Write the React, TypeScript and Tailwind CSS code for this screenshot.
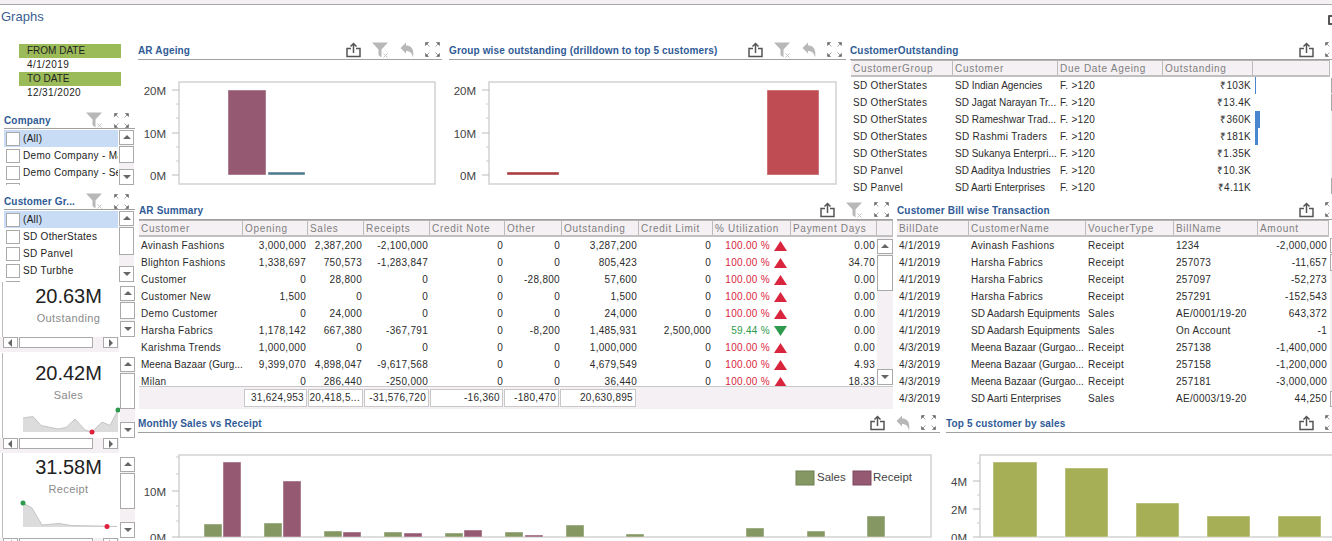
import React from 'react';

const titleCls = "text-[#2f5b96] font-bold text-[10px] tracking-[0.15px] whitespace-nowrap pt-[1px]";
const cellCls = "px-[2px] overflow-hidden whitespace-nowrap";
// long names sit tighter so they stay inside their column
const nameCls = (c: string) => cellCls + (c.length > 17 ? " tracking-[0px]" : "");

const ShareIcon = () => (
  <svg width="15" height="16" viewBox="0 0 15 16" fill="none" stroke="#555" strokeWidth="1.5" className="shrink-0">
    <path d="M5 6.5H1V14.5H14V6.5H10" />
    <path d="M7.5 11V1.5M4.5 4.5L7.5 1.5L10.5 4.5" />
  </svg>
);

const FilterIcon = () => (
  <svg width="17" height="16" viewBox="0 0 17 16" className="shrink-0">
    <path d="M0 0.5H16L9.5 7.5V15.5L6.5 13V7.5Z" fill="#b8b8b8" />
    <path d="M11.5 11.5L15.5 15.5M15.5 11.5L11.5 15.5" stroke="#c4c4c4" strokeWidth="1" />
  </svg>
);

const UndoIcon = () => (
  <svg width="14" height="16" viewBox="0 0 14 16" className="shrink-0">
    <path d="M0.5 6L6 0.5V3.5C11 3.5 14.5 7 13 15.5C12 11 10 9 6 9V11.5Z" fill="#b8b8b8" />
  </svg>
);

const ExpandIcon = () => (
  <svg width="15" height="15" viewBox="0 0 15 15" fill="#6a6a6a" stroke="#6a6a6a" strokeWidth="0.6" className="shrink-0">
    <path d="M0.5 0.5H3.5L0.5 3.5ZM1.5 1.5L4.5 4.5" />
    <path d="M14.5 0.5H11.5L14.5 3.5ZM13.5 1.5L10.5 4.5" />
    <path d="M0.5 14.5H3.5L0.5 11.5ZM1.5 13.5L4.5 10.5" />
    <path d="M14.5 14.5H11.5L14.5 11.5ZM13.5 13.5L10.5 10.5" />
  </svg>
);

const Arrow = ({ dir }: { dir: 'up' | 'down' | 'left' | 'right' }) => {
  const paths = { up: "M1 6H9L5 2Z", down: "M1 3H9L5 7Z", left: "M6 1V9L2 5Z", right: "M3 1V9L7 5Z" };
  return (
    <svg width="10" height="10" viewBox="0 0 10 10">
      <path d={paths[dir]} fill="#666" />
    </svg>
  );
};

const ScrollBtn = ({ dir, className }: { dir: 'up' | 'down' | 'left' | 'right'; className: string }) => (
  <div className={"shrink-0 bg-white border border-[#aaa] flex items-center justify-center " + className}>
    <Arrow dir={dir} />
  </div>
);

const VScroll = ({ className, thumb }: { className: string; thumb: string }) => (
  <div className={"w-[15px] shrink-0 bg-[#f5f0f3] flex flex-col justify-between " + className}>
    <div className="flex flex-col gap-[1px]">
      <ScrollBtn dir="up" className="h-[15px]" />
      <div className={"bg-white border border-[#aaa] " + thumb} />
    </div>
    <ScrollBtn dir="down" className="h-[16px]" />
  </div>
);

const HScroll = () => (
  <div className="h-[15px] bg-[#f5f0f3] flex items-start pl-[3px] w-[119px] shrink-0">
    <ScrollBtn dir="left" className="w-[15px] h-[11px]" />
    <div className="w-[74px] h-[11px] bg-white border border-[#aaa] ml-[1px]" />
    <ScrollBtn dir="right" className="w-[15px] h-[11px] ml-[10px]" />
  </div>
);

const PanelHeader = ({ title, share, filter, undo, expand = true, className }: {
  title: string; share?: boolean; filter?: boolean; undo?: boolean; expand?: boolean; className: string;
}) => (
  <div className={"h-[20px] shrink-0 border-b border-[#a0a0a0] flex items-center justify-between " + className}>
    <span className={titleCls}>{title}</span>
    <div className="flex items-center gap-[11px]">
      {share && <ShareIcon />}
      {filter && <FilterIcon />}
      {undo && <UndoIcon />}
      {expand && <ExpandIcon />}
    </div>
  </div>
);

const SliceRow = ({ label, active }: { label: string; active?: boolean }) => (
  <div className={"h-[17px] shrink-0 flex items-center pl-[2px] gap-[3px] text-[10px] tracking-[0.3px] text-[#222] whitespace-nowrap overflow-hidden " + (active ? "bg-[#c9dcf5]" : "")}>
    <div className="w-[14px] h-[14px] shrink-0 bg-white border border-[#aaa]" />
    <span>{label}</span>
  </div>
);

const Slicer = ({ title, rows, listCls, thumb, headCls }: { title: string; rows: string[]; listCls: string; thumb: string; headCls: string }) => (
  <div className={"ml-[4px] w-[131px] " + headCls}>
    <div className="h-[17px] border-b border-[#a0a0a0] flex items-center justify-between pr-[6px]">
      <span className={titleCls}>{title}</span>
      <div className="flex items-center gap-[11px]">
        <FilterIcon />
        <ExpandIcon />
      </div>
    </div>
    <div className={"flex mt-[1px] " + listCls}>
      <div className="w-[114px] overflow-hidden">
        {rows.map((r, i) => <SliceRow key={r} label={r} active={i === 0} />)}
        <SliceRow label="" />
      </div>
      <VScroll className="ml-[1px] h-full" thumb={thumb} />
    </div>
  </div>
);

const Kpi = ({ value, label, heightCls, nameCls, thumb, children }: {
  value: string; label: string; heightCls: string; nameCls: string; thumb: string; children?: React.ReactNode;
}) => (
  <div className="w-[136px] shrink-0">
    <div className={"flex " + heightCls}>
      <div className="ml-[2px] w-[118px] pl-[14px] border-l border-[#bbb] flex flex-col items-center overflow-hidden">
        <div className={"text-[20px] leading-[24px] text-[#222] " + nameCls}>{value}</div>
        <div className="text-[11px] leading-[16px] mt-[2px] text-[#8a8a8a] tracking-[0.4px]">{label}</div>
        {children}
      </div>
      <VScroll className="mt-[4px] h-auto" thumb={thumb} />
    </div>
    <HScroll />
  </div>
);

const Panel = ({ className, children }: { className: string; children: React.ReactNode }) => (
  <div className={"flex flex-col overflow-hidden shrink-0 " + className}>{children}</div>
);

// charts use page coordinates through the viewBox, so the numbers read like the picture
const Chart = ({ box, children }: { box: [number, number, number, number]; children: React.ReactNode }) => (
  <svg viewBox={box.join(' ')} width={box[2]} height={box[3]} className="block" fontFamily="'Liberation Sans', sans-serif" fontSize="11.5" fill="#444">
    {children}
  </svg>
);

const Axis = ({ x, labels, minor, box }: { x: number; labels: [string, number][]; minor: number[]; box: [number, number, number, number] }) => (
  <g>
    <rect x={box[0]} y={box[1]} width={box[2]} height={box[3]} fill="#fff" stroke="#d2d2d2" strokeWidth="1.5" />
    {labels.map(([t, y]) => (
      <g key={t}>
        <line x1={x - 7} x2={x} y1={y} y2={y} stroke="#bbb" />
        <text x={x - 13} y={y + 5} textAnchor="end">{t}</text>
      </g>
    ))}
    {minor.map((y) => <line key={y} x1={x - 3} x2={x} y1={y} y2={y} stroke="#ccc" />)}
  </g>
);

const Bar = ({ x, w, y, base, color }: { x: number; w: number; y: number; base: number; color: string }) => (
  <rect x={x} y={y} width={w} height={base - y} fill={color} stroke="#fff" strokeOpacity="0.45" strokeWidth="1" />
);

const TableHead = ({ cols, grid, className }: { cols: string[]; grid: string; className?: string }) => (
  <div className={"grid h-[17px] shrink-0 bg-[#f5f0f3] border-t border-[#b5b5b5] border-b-2 border-b-[#c0c0c0] text-[10px] tracking-[0.7px] text-[#808080] " + grid + " " + (className || "")}>
    {cols.map((c, i) => (
      <div key={i} className="px-[2px] border-r border-[#bbb] overflow-hidden whitespace-nowrap leading-[15px]">{c}</div>
    ))}
  </div>
);

const outstandingGrid = "grid-cols-[102px_105px_105px_90px_77px]";
const outstandingRows = [
  ["SD OtherStates", "SD Indian Agencies", "₹103K", "w-[1px]"],
  ["SD OtherStates", "SD Jagat Narayan Tr...", "₹13.4K", "w-0"],
  ["SD OtherStates", "SD Rameshwar Trad...", "₹360K", "w-[5px]"],
  ["SD OtherStates", "SD Rashmi Traders", "₹181K", "w-[3px]"],
  ["SD OtherStates", "SD Sukanya Enterpri...", "₹1.35K", "w-0"],
  ["SD Panvel", "SD Aaditya Industries", "₹10.3K", "w-0"],
  ["SD Panvel", "SD Aarti Enterprises", "₹4.11K", "w-0"],
];

const summaryGrid = "grid-cols-[104px_65px_56px_66px_75px_57px_77px_74px_78px_86px]";
const summaryHead = ["Customer", "Opening", "Sales", "Receipts", "Credit Note", "Other", "Outstanding", "Credit Limit", "% Utilization", "Payment Days"];
const summaryRows = [
  ["Avinash Fashions", "3,000,000", "2,387,200", "-2,100,000", "0", "0", "3,287,200", "0", "100.00 %", "0.00"],
  ["Blighton Fashions", "1,338,697", "750,573", "-1,283,847", "0", "0", "805,423", "0", "100.00 %", "34.70"],
  ["Customer", "0", "28,800", "0", "0", "-28,800", "57,600", "0", "100.00 %", "0.00"],
  ["Customer New", "1,500", "0", "0", "0", "0", "1,500", "0", "100.00 %", "0.00"],
  ["Demo Customer", "0", "24,000", "0", "0", "0", "24,000", "0", "100.00 %", "0.00"],
  ["Harsha Fabrics", "1,178,142", "667,380", "-367,791", "0", "-8,200", "1,485,931", "2,500,000", "59.44 %", "0.00"],
  ["Karishma Trends", "1,000,000", "0", "0", "0", "0", "1,000,000", "0", "100.00 %", "0.00"],
  ["Meena Bazaar (Gurg...", "9,399,070", "4,898,047", "-9,617,568", "0", "0", "4,679,549", "0", "100.00 %", "4.93"],
  ["Milan", "0", "286,440", "-250,000", "0", "0", "36,440", "0", "100.00 %", "18.33"],
];
const summaryTotals = ["31,624,953", "20,418,5...", "-31,576,720", "-16,360", "-180,470", "20,630,895"];

const billGrid = "grid-cols-[72px_117px_88px_84px_71px]";
const billRows = [
  ["4/1/2019", "Avinash Fashions", "Receipt", "1234", "-2,000,000"],
  ["4/1/2019", "Harsha Fabrics", "Receipt", "257073", "-11,657"],
  ["4/1/2019", "Harsha Fabrics", "Receipt", "257097", "-52,273"],
  ["4/1/2019", "Harsha Fabrics", "Receipt", "257291", "-152,543"],
  ["4/1/2019", "SD Aadarsh Equipments", "Sales", "AE/0001/19-20", "643,372"],
  ["4/1/2019", "SD Aadarsh Equipments", "Sales", "On Account", "-1"],
  ["4/3/2019", "Meena Bazaar (Gurgao...", "Receipt", "257138", "-1,400,000"],
  ["4/3/2019", "Meena Bazaar (Gurgao...", "Receipt", "257158", "-1,200,000"],
  ["4/3/2019", "Meena Bazaar (Gurgao...", "Receipt", "257181", "-3,000,000"],
  ["4/3/2019", "SD Aarti Enterprises", "Sales", "AE/0003/19-20", "44,250"],
];

const bodyText = "text-[10px] tracking-[0.3px] text-[#2b2b2b] leading-[17px]";

const Utilization = ({ value }: { value: string }) => {
  const up = value.startsWith('100');
  return (
    <div className={"flex items-center justify-end gap-[4px] pr-[4px] " + (up ? "text-[#d9263e]" : "text-[#2e9a4d]")}>
      <span>{value}</span>
      <svg width="13" height="10" viewBox="0 0 13 10">
        <path d={up ? "M0 10H13L6.5 0Z" : "M0 0H13L6.5 10Z"} fill={up ? "#d9263e" : "#2e9a4d"} />
      </svg>
    </div>
  );
};

const monthly: [number, number, string][] = [
  [204, 525, "s"], [223, 463, "r"], [264, 524, "s"], [283, 482, "r"],
  [324, 532, "s"], [343, 533, "r"], [384, 533, "s"], [404, 534, "r"],
  [445, 534, "s"], [464, 531, "r"], [505, 533, "s"], [525, 536, "r"],
  [566, 526, "s"], [626, 535, "s"], [746, 529, "s"], [807, 532, "s"], [867, 517, "s"],
];

const top5: [number, number, number][] = [
  [993, 44, 463], [1065, 43, 469], [1136, 43, 504], [1207, 43, 517], [1278, 43, 517],
];

export default function App() {
  return (
    <div className="w-[1332px] h-[541px] overflow-hidden bg-white font-['Liberation_Sans',sans-serif]">
      <div className="h-[5px] bg-[#f5f0f3] border-b border-[#a9a9a9]" />
      <div className="h-[35px] flex justify-between pt-[3px] pl-[1px] text-[13px] leading-[18px] text-[#3a6091]">
        <span>Graphs</span>
        <div className="w-[10px] h-[10px] mt-[7px] -mr-[6px] border-2 border-[#555] rounded-[1px]" />
      </div>

      <div className="flex">
        {/* left rail */}
        <div className="w-[138px] shrink-0 flex flex-col">
          <div className="ml-[19px] w-[102px] mt-[4px] text-[10px] leading-[14px] text-[#222]">
            <div className="bg-[#9bbb59] pl-[8px]">FROM DATE</div>
            <div className="pl-[8px] tracking-[0.4px]">4/1/2019</div>
            <div className="bg-[#9bbb59] pl-[8px]">TO DATE</div>
            <div className="pl-[8px] tracking-[0.4px]">12/31/2020</div>
          </div>
          <Slicer
            title="Company"
            headCls="mt-[12px]"
            listCls="h-[55px]"
            thumb="h-[17px]"
            rows={["(All)", "Demo Company - Ma", "Demo Company - Ser"]}
          />
          <Slicer
            title="Customer Gr..."
            headCls="mt-[8px]"
            listCls="h-[71px]"
            thumb="h-[28px]"
            rows={["(All)", "SD OtherStates", "SD Panvel", "SD Turbhe"]}
          />
          <Kpi value="20.63M" label="Outstanding" heightCls="h-[55px]" nameCls="mt-[2px]" thumb="h-[17px]" />
          <Kpi value="20.42M" label="Sales" heightCls="h-[85px] mt-[1px]" nameCls="mt-[8px]" thumb="h-[36px]">
            <svg width="102" height="30" viewBox="0 0 102 30" className="block shrink-0 mt-[2px] ml-[2px]">
              <path d="M4 13L14 11.5L22 20.5L39 24L47 22.5L56 14L66 25L73 27L83 17L91 20.5L99 5V27H4Z" fill="#dcdcdc" />
              <path d="M4 13L14 11.5L22 20.5L39 24L47 22.5L56 14L66 25L73 27L83 17L91 20.5L99 5" fill="none" stroke="#c4c4c4" />
              <circle cx="73" cy="27" r="2.5" fill="#e0203c" />
              <circle cx="99" cy="5" r="2.5" fill="#2e9a4d" />
            </svg>
          </Kpi>
          <Kpi value="31.58M" label="Receipt" heightCls="h-[85px]" nameCls="mt-[2px]" thumb="h-[36px]">
            <svg width="102" height="30" viewBox="0 0 102 30" className="block shrink-0 mt-[2px] ml-[2px]">
              <path d="M4 4L13 9L23 26L40 24.5L52 26.5L88 27V28H4Z" fill="#dcdcdc" />
              <path d="M4 4L13 9L23 26L40 24.5L52 26.5L98 27.5" fill="none" stroke="#c4c4c4" />
              <circle cx="4" cy="4" r="2.5" fill="#2e9a4d" />
              <circle cx="88" cy="27.5" r="2.5" fill="#e0203c" />
            </svg>
          </Kpi>
        </div>

        {/* panels */}
        <div className="flex flex-col">
          <div className="h-[160px] flex">
            <Panel className="w-[304px]">
              <PanelHeader title="AR Ageing" share filter undo className="pr-[2px]" />
              <Chart box={[138, 61, 304, 139]}>
                <Axis x={179} labels={[["20M", 91], ["10M", 134], ["0M", 176]]} minor={[105, 119, 148, 162]} box={[179, 83, 256, 102]} />
                <Bar x={228} w={38} y={91} base={176} color="#955a72" />
                <Bar x={268} w={37} y={173} base={176} color="#4f7a8a" />
              </Chart>
            </Panel>
            <Panel className="w-[397px] ml-[7px]">
              <PanelHeader title="Group wise outstanding (drilldown to top 5 customers)" share filter undo className="pr-[4px]" />
              <Chart box={[449, 61, 397, 139]}>
                <Axis x={489} labels={[["20M", 91], ["10M", 134], ["0M", 176]]} minor={[105, 119, 148, 162]} box={[489, 83, 347, 102]} />
                <Bar x={507} w={52} y={173} base={176} color="#a83c40" />
                <Bar x={767} w={52} y={91} base={176} color="#bf4c52" />
              </Chart>
            </Panel>
            <Panel className="w-[482px] ml-[4px]">
              <PanelHeader title="CustomerOutstanding" share className="-mr-[8px]" />
              <div className="flex ml-[1px]">
                <div className="flex flex-col">
                  <TableHead cols={["CustomerGroup", "Customer", "Due Date Ageing", "Outstanding", ""]} grid={outstandingGrid} />
                  {outstandingRows.map((r, i) => (
                    <div key={i} className={"grid h-[17px] " + outstandingGrid + " " + bodyText}>
                      <div className={cellCls}>{r[0]}</div>
                      <div className={nameCls(r[1])}>{r[1]}</div>
                      <div className={cellCls}>F. &gt;120</div>
                      <div className={cellCls + " text-right"}>{r[2]}</div>
                      <div className="pl-[2px]"><div className={"h-[17px] bg-[#4a86d0] " + r[3]} /></div>
                    </div>
                  ))}
                </div>
                <VScroll className="mt-[18px] h-[116px] ml-[1px]" thumb="h-[17px]" />
              </div>
            </Panel>
          </div>

          <div className="h-[213px] flex">
            <Panel className="w-[755px]">
              <PanelHeader title="AR Summary" share filter className="ml-[1px] pr-[4px]" />
              <div className="ml-[1px] flex flex-col">
                <TableHead cols={[...summaryHead, ""]} grid="grid-cols-[104px_65px_56px_66px_75px_57px_77px_74px_78px_86px_16px]" />
                <div className="flex h-[149px] overflow-hidden">
                  <div className="w-[738px]">
                    {summaryRows.map((r) => (
                      <div key={r[0]} className={"grid h-[17px] " + summaryGrid + " " + bodyText}>
                        {r.map((c, i) => i === 8
                          ? <Utilization key={i} value={c} />
                          : <div key={i} className={i === 0 ? nameCls(c) : cellCls + " text-right"}>{c}</div>)}
                      </div>
                    ))}
                  </div>
                  <VScroll className="h-[148px] w-[16px] pt-[2px]" thumb="h-[36px]" />
                </div>
                <div className={"h-[23px] bg-[#f5f0f3] border-t border-[#c8c8c8] flex items-center pl-[105px] w-[754px] gap-[1px] " + bodyText}>
                  {summaryTotals.map((t, i) => (
                    <div key={t} className={"h-[18px] bg-white border border-[#c8c8c8] text-right pr-[2px] leading-[16px] overflow-hidden whitespace-nowrap " + ["w-[63px]", "w-[55px]", "w-[65px]", "w-[73px]", "w-[55px]", "w-[76px]"][i]}>{t}</div>
                  ))}
                </div>
              </div>
            </Panel>
            <Panel className="w-[435px] ml-[4px]">
              <PanelHeader title="Customer Bill wise Transaction" share className="-mr-[8px]" />
              <div className="flex">
                <div className="flex flex-col">
                  <TableHead cols={["BillDate", "CustomerName", "VoucherType", "BillName", "Amount"]} grid={billGrid} />
                  {billRows.map((r, i) => (
                    <div key={i} className={"grid h-[17px] " + billGrid + " " + bodyText}>
                      {r.map((c, j) => <div key={j} className={j === 1 ? nameCls(c) : cellCls + (j === 4 ? " text-right" : "")}>{c}</div>)}
                    </div>
                  ))}
                </div>
                <VScroll className="mt-[18px] h-[169px] ml-[1px]" thumb="h-[17px]" />
              </div>
            </Panel>
          </div>

          <div className="h-[128px] flex">
            <Panel className="w-[802px]">
              <PanelHeader title="Monthly Sales vs Receipt" share undo className="pr-[4px]" />
              <Chart box={[138, 434, 802, 107]}>
                <Axis x={179} labels={[["10M", 492], ["0M", 538]]} minor={[458, 475, 507, 522]} box={[179, 456, 752, 82]} />
                {monthly.map(([x, y, k], i) => (
                  <Bar key={i} x={x} w={18} y={y} base={538} color={k === "s" ? "#859763" : "#955a72"} />
                ))}
                <rect x={796} y={472} width={18} height={14} fill="#859763" stroke="#6f8050" />
                <text x={817} y={482}>Sales</text>
                <rect x={853} y={472} width={18} height={14} fill="#955a72" stroke="#7c4860" />
                <text x={873} y={482}>Receipt</text>
              </Chart>
            </Panel>
            <Panel className="w-[386px] ml-[6px]">
              <PanelHeader title="Top 5 customer by sales" share className="-mr-[8px]" />
              <Chart box={[946, 434, 386, 107]}>
                <Axis x={980} labels={[["4M", 482], ["2M", 510], ["0M", 538]]} minor={[464, 496, 524]} box={[980, 456, 360, 82]} />
                {top5.map(([x, w, y]) => <Bar key={x} x={x} w={w} y={y} base={538} color="#a6ae56" />)}
              </Chart>
            </Panel>
          </div>
        </div>
      </div>
    </div>
  );
}
